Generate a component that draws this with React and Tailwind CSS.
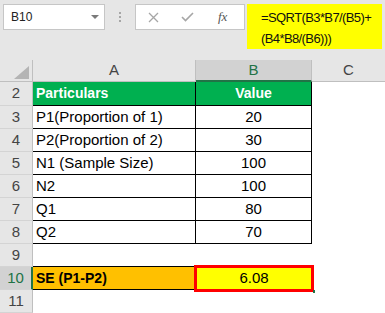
import React from "react";

const tableRows = [
  { n: 3, a: "P1(Proportion of 1)", b: "20" },
  { n: 4, a: "P2(Proportion of 2)", b: "30" },
  { n: 5, a: "N1 (Sample Size)", b: "100" },
  { n: 6, a: "N2", b: "100" },
  { n: 7, a: "Q1", b: "80" },
  { n: 8, a: "Q2", b: "70" },
];

function RowHead({ n, selected, h = "h-[23px]" }) {
  return (
    <div
      className={
        "w-[33px] shrink-0 flex items-center justify-center text-[15px] border-b border-b-[#d4d4d4] " +
        h +
        (selected
          ? " bg-[#d2d2d2] text-[#217346] border-r-2 border-r-[#217346]"
          : " bg-[#e6e6e6] text-[#444] border-r border-r-[#bfbfbf]")
      }
    >
      {n}
    </div>
  );
}

export default function App() {
  return (
    <div className="w-[385px] h-[313px] overflow-hidden bg-[#e6e6e6] font-['Liberation_Sans',Arial,sans-serif] text-black">
      {/* formula bar */}
      <div className="h-[60px] flex items-start pt-[4px] pl-[3px]">
        <div className="w-[102px] h-[26px] bg-white border border-[#c6c6c6] flex items-center justify-between pl-[7px] pr-[5px] shrink-0">
          <span className="text-[12px] text-[#222]">B10</span>
          <svg width="8" height="4" viewBox="0 0 8 4">
            <path d="M0 0H8L4 4Z" fill="#7a7a7a" />
          </svg>
        </div>
        <div className="w-[30px] h-[26px] flex flex-col items-center justify-center gap-[2px] shrink-0">
          <div className="w-[2px] h-[2px] bg-[#a6a6a6]" />
          <div className="w-[2px] h-[2px] bg-[#a6a6a6]" />
          <div className="w-[2px] h-[2px] bg-[#a6a6a6]" />
        </div>
        <div className="w-[110px] h-[26px] bg-white border border-[#c6c6c6] flex items-center shrink-0">
          <svg className="ml-[12px]" width="11" height="11" viewBox="0 0 11 11">
            <path d="M1 1L10 10M10 1L1 10" stroke="#a6a6a6" strokeWidth="1.3" fill="none" />
          </svg>
          <svg className="ml-[22px]" width="13" height="10" viewBox="0 0 13 10">
            <path d="M1 5L4.5 8.5L12 1" stroke="#a6a6a6" strokeWidth="1.6" fill="none" />
          </svg>
          <span className="ml-[24px] text-[13px] italic text-[#555] font-['Liberation_Serif',serif]">fx</span>
        </div>
        <div className="ml-[2px] w-[135px] h-[45px] bg-[#ffff00] pl-[14px] pt-[3px] text-[13px] tracking-[-0.6px] leading-[21px] text-[#111] shrink-0 whitespace-nowrap">
          <div>=SQRT(B3*B7/(B5)+</div>
          <div>(B4*B8/(B6)))</div>
        </div>
      </div>

      {/* column headers */}
      <div className="flex h-[22px]">
        <div className="w-[33px] shrink-0 border-r border-b border-[#bfbfbf] flex items-end justify-end pr-[3px] pb-[2px]">
          <svg width="15" height="13" viewBox="0 0 15 13">
            <path d="M0 13H15V0Z" fill="#b4b4b4" />
          </svg>
        </div>
        <div className="w-[163px] shrink-0 border-r border-b border-[#bfbfbf] flex items-center justify-center text-[15px] text-[#444]">
          A
        </div>
        <div className="w-[116px] shrink-0 bg-[#d2d2d2] border-r border-r-[#bfbfbf] border-b-2 border-b-[#217346] flex items-center justify-center text-[15px] text-[#217346]">
          B
        </div>
        <div className="flex-1 border-b border-[#bfbfbf] flex items-center justify-center text-[15px] text-[#444]">
          C
        </div>
      </div>

      {/* grid body */}
      <div className="bg-white">
        {/* row 2 */}
        <div className="flex h-[24px]">
          <RowHead n={2} h="h-[24px]" />
          <div className="w-[163px] shrink-0 bg-[#00b050] border-r border-b border-black flex items-center pl-[3px] text-[14px] font-bold text-white">
            Particulars
          </div>
          <div className="w-[116px] shrink-0 bg-[#00b050] border-r border-b border-black flex items-center justify-center text-[14px] font-bold text-white">
            Value
          </div>
          <div className="flex-1" />
        </div>

        {tableRows.map((r) => (
          <div key={r.n} className="flex h-[23px]">
            <RowHead n={r.n} />
            <div className="w-[163px] shrink-0 border-r border-b border-black flex items-center pl-[3px] text-[15px] whitespace-nowrap">
              {r.a}
            </div>
            <div className="w-[116px] shrink-0 border-r border-b border-black flex items-center justify-center text-[15px]">
              {r.b}
            </div>
            <div className="flex-1" />
          </div>
        ))}

        {/* row 9 */}
        <div className="flex h-[23px]">
          <RowHead n={9} />
          <div className="w-[163px] shrink-0 border-b border-black" />
          <div className="flex-1" />
        </div>

        {/* row 10 */}
        <div className="flex h-[23px]">
          <RowHead n={10} selected />
          <div className="w-[163px] shrink-0 bg-[#ffc000] border-r border-b border-black flex items-center pl-[3px] text-[14px] font-bold">
            SE (P1-P2)
          </div>
          <div className="w-[116px] shrink-0 bg-[#ffff00] relative flex items-center justify-center text-[15px]">
            6.08
            <div className="absolute -left-[2px] -right-[2px] -top-[2px] -bottom-[2px] border-[3px] border-[#ff0000]" />
            <div className="absolute -right-[3px] -bottom-[3px] w-[2px] h-[3px] bg-[#217346]" />
          </div>
          <div className="flex-1" />
        </div>

        {/* row 11 */}
        <div className="flex h-[23px]">
          <RowHead n={11} />
          <div className="flex-1" />
        </div>
      </div>
    </div>
  );
}
